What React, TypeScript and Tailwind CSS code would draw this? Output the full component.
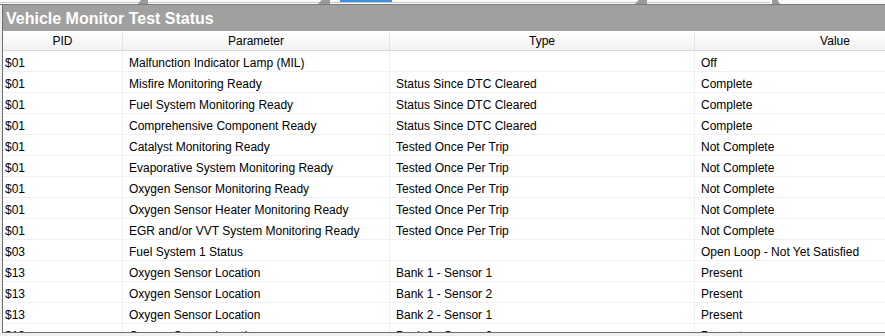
const rows: [string, string, string, string][] = [
  ['$01', 'Malfunction Indicator Lamp (MIL)', '', 'Off'],
  ['$01', 'Misfire Monitoring Ready', 'Status Since DTC Cleared', 'Complete'],
  ['$01', 'Fuel System Monitoring Ready', 'Status Since DTC Cleared', 'Complete'],
  ['$01', 'Comprehensive Component Ready', 'Status Since DTC Cleared', 'Complete'],
  ['$01', 'Catalyst Monitoring Ready', 'Tested Once Per Trip', 'Not Complete'],
  ['$01', 'Evaporative System Monitoring Ready', 'Tested Once Per Trip', 'Not Complete'],
  ['$01', 'Oxygen Sensor Monitoring Ready', 'Tested Once Per Trip', 'Not Complete'],
  ['$01', 'Oxygen Sensor Heater Monitoring Ready', 'Tested Once Per Trip', 'Not Complete'],
  ['$01', 'EGR and/or VVT System Monitoring Ready', 'Tested Once Per Trip', 'Not Complete'],
  ['$03', 'Fuel System 1 Status', '', 'Open Loop - Not Yet Satisfied'],
  ['$13', 'Oxygen Sensor Location', 'Bank 1 - Sensor 1', 'Present'],
  ['$13', 'Oxygen Sensor Location', 'Bank 1 - Sensor 2', 'Present'],
  ['$13', 'Oxygen Sensor Location', 'Bank 2 - Sensor 1', 'Present'],
  ['$13', 'Oxygen Sensor Location', 'Bank 2 - Sensor 2', 'Present'],
];

const TabStrip = () => (
  <div className="relative h-[5px] shrink-0 bg-[#fafafa] border-b border-[#7a7a7a]">
    <div className="absolute left-0 top-[2px] h-[1px] w-[770px] bg-[#c8c8c8]" />
    <div className="absolute left-[138px] top-0 h-[4px] w-[10px] bg-[#9a9a9a] [clip-path:polygon(30%_0,100%_0,100%_100%,0_100%)]" />
    <div className="absolute left-[318px] top-0 h-[4px] w-[12px] bg-[#9a9a9a] [clip-path:polygon(30%_0,100%_0,100%_100%,0_100%)]" />
    <div className="absolute left-[340px] top-0 h-[2px] w-[52px] bg-[#3d8ee0]" />
    <div className="absolute left-[635px] top-0 h-[4px] w-[12px] bg-[#9a9a9a] [clip-path:polygon(30%_0,100%_0,100%_100%,0_100%)]" />
    <div className="absolute left-[772px] top-0 h-[4px] w-[8px] bg-[#9a9a9a] [clip-path:polygon(0_0,70%_0,100%_100%,0_100%)]" />
  </div>
);

export default function App() {
  return (
    <div className="w-[885px] h-[336px] overflow-hidden bg-[#f0f0f0] text-black font-['Liberation_Sans',Arial,sans-serif]">
      <TabStrip />
      <div className="ml-[2px] h-[328px] flex flex-col overflow-hidden border-l border-b border-[#6e6e6e] bg-white">
        <div className="h-[26px] shrink-0 bg-[#a0a0a0] pl-[3px] pt-[1px] text-[16px] font-bold leading-[25px] text-white">
          Vehicle Monitor Test Status
        </div>
        <div className="flex h-[20px] shrink-0 border-b border-[#d8d8d8] bg-gradient-to-b from-white to-[#f1f1f1] pt-[2px] text-[12px] leading-[17px]">
          <div className="w-[120px] shrink-0 border-r border-[#e3e3e3] text-center">PID</div>
          <div className="w-[267px] shrink-0 border-r border-[#e3e3e3] text-center">Parameter</div>
          <div className="w-[305px] shrink-0 border-r border-[#e3e3e3] text-center">Type</div>
          <div className="w-[280px] shrink-0 text-center">Value</div>
        </div>
        <div className="flex flex-col overflow-hidden">
          {rows.map((r, i) => (
            <div key={i} className="flex h-[21px] shrink-0 border-b border-[#f0f0f0] text-[12px] leading-[20px]">
              <div className="w-[120px] shrink-0 border-r border-[#f0f0f0] pl-[2px] pt-[2px] whitespace-nowrap">{r[0]}</div>
              <div className="w-[267px] shrink-0 border-r border-[#f0f0f0] pl-[6px] pt-[2px] whitespace-nowrap">{r[1]}</div>
              <div className="w-[305px] shrink-0 border-r border-[#f0f0f0] pl-[6px] pt-[2px] whitespace-nowrap">{r[2]}</div>
              <div className="w-[280px] shrink-0 pl-[6px] pt-[2px] whitespace-nowrap">{r[3]}</div>
            </div>
          ))}
        </div>
      </div>
    </div>
  );
}
